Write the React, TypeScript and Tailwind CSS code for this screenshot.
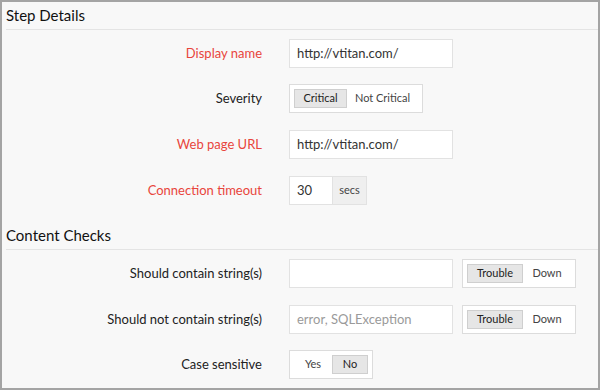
import React from "react";

const font = { fontFamily: "Lato, 'Open Sans', sans-serif" };

function Row({ label, required, className, children }: { label: string; required?: boolean; className?: string; children: React.ReactNode }) {
  return (
    <div className={`flex items-center h-[29px] ${className ?? ""}`}>
      <div className={`w-[260px] text-right text-[13px] ${required ? "text-[#e8453c]" : "text-[#222]"}`}>{label}</div>
      <div className="ml-[27px] flex items-center gap-[9px]">{children}</div>
    </div>
  );
}

function TextBox({ value, placeholder }: { value?: string; placeholder?: string }) {
  return (
    <div className="w-[164px] h-[29px] bg-white border border-[#e2e2e2] flex items-center px-[7px] text-[13px]">
      {value ? <span className="text-[#333]">{value}</span> : <span className="text-[#9a9a9a]">{placeholder}</span>}
    </div>
  );
}

function Toggle({ options, selected, widths }: { options: string[]; selected: number; widths: number[] }) {
  return (
    <div className="h-[29px] bg-white border border-[#dcdcdc] flex items-center px-[4px]">
      {options.map((o, i) => (
        <div
          key={o}
          style={{ width: widths[i] }}
          className={`h-[19px] flex items-center justify-center text-[11px] ${
            i === selected ? "bg-[#e6e6e6] border border-[#cfcfcf] text-[#222]" : "text-[#444]"
          }`}
        >
          {o}
        </div>
      ))}
    </div>
  );
}

export default function App() {
  return (
    <div style={font} className="w-[600px] h-[390px] border-2 border-[#a4a4a4] bg-[#f8f8f8] overflow-hidden">
      <div className="ml-[4px] h-[28px] border-b border-[#e4e4e4] flex items-center text-[15px] text-[#111]">Step Details</div>
      <div className="flex flex-col">
        <Row label="Display name" required className="mt-[9px]">
          <TextBox value="http://vtitan.com/" />
        </Row>
        <Row label="Severity" className="mt-[16px]">
          <Toggle options={["Critical", "Not Critical"]} selected={0} widths={[53, 71]} />
        </Row>
        <Row label="Web page URL" required className="mt-[17px]">
          <TextBox value="http://vtitan.com/" />
        </Row>
        <Row label="Connection timeout" required className="mt-[17px]">
          <div className="h-[29px] flex border border-[#e2e2e2] text-[13px]">
            <div className="w-[42px] bg-white flex items-center px-[7px] text-[#333]">30</div>
            <div className="w-[34px] bg-[#efefef] border-l border-[#e2e2e2] flex items-center justify-center text-[11px] text-[#444]">secs</div>
          </div>
        </Row>
      </div>
      <div className="mt-[17px] ml-[4px] h-[28px] border-b border-[#e4e4e4] flex items-center text-[15px] text-[#111]">Content Checks</div>
      <div className="flex flex-col">
        <Row label="Should contain string(s)" className="mt-[9px]">
          <TextBox />
          <Toggle options={["Trouble", "Down"]} selected={0} widths={[56, 48]} />
        </Row>
        <Row label="Should not contain string(s)" className="mt-[17px]">
          <TextBox placeholder="error, SQLException" />
          <Toggle options={["Trouble", "Down"]} selected={0} widths={[56, 48]} />
        </Row>
        <Row label="Case sensitive" className="mt-[16px]">
          <Toggle options={["Yes", "No"]} selected={1} widths={[38, 36]} />
        </Row>
      </div>
    </div>
  );
}
